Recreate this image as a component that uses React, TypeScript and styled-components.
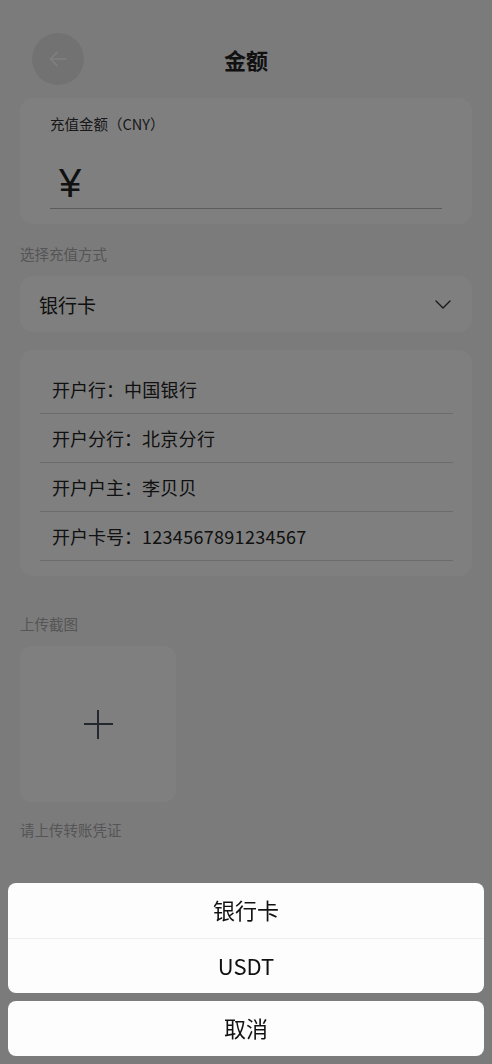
import React from "react";
import styled, { createGlobalStyle } from "styled-components";

const GlobalStyle = createGlobalStyle`
  * { box-sizing: border-box; }
  body {
    margin: 0;
    background: #f7f7f9;
    font-family: "Noto Sans CJK SC", "Noto Sans", sans-serif;
    color: #222;
  }
`;

const accountRows = [
  { label: "开户行", value: "中国银行" },
  { label: "开户分行", value: "北京分行" },
  { label: "开户户主", value: "李贝贝" },
  { label: "开户卡号", value: "1234567891234567" },
];

const sheetOptions = ["银行卡", "USDT"];

function App() {
  return (
    <>
      <GlobalStyle />
      <Page>
        <Header>
          <BackButton aria-label="返回">
            <svg width="26" height="26" viewBox="0 0 24 24" fill="none">
              <path d="M19 12H5M11 6l-6 6 6 6" stroke="#fff" strokeWidth="1.6" strokeLinecap="round" strokeLinejoin="round" />
            </svg>
          </BackButton>
          <Title>金额</Title>
        </Header>

        <AmountCard>
          <FieldLabel>充值金额（CNY）</FieldLabel>
          <AmountRow>
            <Currency>¥</Currency>
          </AmountRow>
        </AmountCard>

        <SectionLabel>选择充值方式</SectionLabel>
        <SelectBox>
          <span>银行卡</span>
          <svg width="16" height="9" viewBox="0 0 16 9" fill="none">
            <path d="M1 1l7 7 7-7" stroke="#333" strokeWidth="1.4" strokeLinecap="round" strokeLinejoin="round" />
          </svg>
        </SelectBox>

        <InfoCard>
          {accountRows.map((row) => (
            <InfoRow key={row.label}>
              {row.label}：<Value>{row.value}</Value>
            </InfoRow>
          ))}
        </InfoCard>

        <SectionLabel $gap={38}>上传截图</SectionLabel>
        <UploadBox>
          <svg width="30" height="30" viewBox="0 0 30 30" fill="none">
            <path d="M15 1v29M1 15h29" stroke="#4a4f5c" strokeWidth="2" />
          </svg>
        </UploadBox>
        <Hint>请上传转账凭证</Hint>
      </Page>

      <Mask />
      <Sheet>
        <SheetGroup>
          {sheetOptions.map((opt) => (
            <SheetItem key={opt}>{opt}</SheetItem>
          ))}
        </SheetGroup>
        <SheetGroup>
          <SheetItem>取消</SheetItem>
        </SheetGroup>
      </Sheet>
    </>
  );
}

const Page = styled.div`
  min-height: 1064px;
  padding: 0 20px;
`;

const Header = styled.header`
  display: grid;
  grid-template-columns: 52px 1fr 52px;
  align-items: center;
  padding: 33px 12px 0;
  margin-bottom: 13px;
`;

const BackButton = styled.button`
  width: 52px;
  height: 52px;
  border-radius: 50%;
  border: none;
  padding: 0;
  background: #e4e4e6;
  display: flex;
  align-items: center;
  justify-content: center;
`;

const Title = styled.h1`
  margin: 0;
  text-align: center;
  font-size: 22px;
  font-weight: 700;
  color: #222;
`;

const Card = styled.div`
  background: #fff;
  border-radius: 14px;
`;

const AmountCard = styled(Card)`
  padding: 17px 30px 15px;
`;

const FieldLabel = styled.div`
  font-size: 14.5px;
  line-height: 18px;
  color: #333;
`;

const AmountRow = styled.div`
  margin-top: 12px;
  height: 64px;
  display: flex;
  align-items: center;
  padding: 12px 0 0 9px;
  border-bottom: 1px solid #b8b8b8;
`;

const Currency = styled.span`
  font-family: "Liberation Sans", Arial, sans-serif;
  font-size: 40px;
  line-height: 1;
  color: #222;
`;

const SectionLabel = styled.div<{ $gap?: number }>`
  margin-top: ${(p) => p.$gap ?? 20}px;
  margin-bottom: 12px;
  font-size: 14.5px;
  line-height: 20px;
  color: #aaa;
`;

const SelectBox = styled(Card)`
  height: 56px;
  display: flex;
  align-items: center;
  justify-content: space-between;
  padding: 0 21px 0 19px;
  font-size: 19px;
  color: #222;
`;

const InfoCard = styled(Card)`
  margin-top: 18px;
  padding: 15px 19px 15px 20px;
`;

const InfoRow = styled.div`
  height: 49px;
  display: flex;
  align-items: center;
  padding-left: 12px;
  font-size: 18px;
  color: #222;
  border-bottom: 1px solid #d8d8d8;
`;

const Value = styled.span`
  letter-spacing: 0.3px;
`;

const UploadBox = styled.div`
  width: 156px;
  height: 156px;
  border-radius: 12px;
  background: #fff;
  display: flex;
  align-items: center;
  justify-content: center;
`;

const Hint = styled.div`
  margin-top: 18px;
  font-size: 14.5px;
  line-height: 20px;
  color: #aaa;
`;

const Mask = styled.div`
  position: fixed;
  inset: 0;
  background: rgba(0, 0, 0, 0.5);
`;

const Sheet = styled.div`
  position: fixed;
  left: 8px;
  right: 8px;
  bottom: 8px;
  display: flex;
  flex-direction: column;
  gap: 8px;
`;

const SheetGroup = styled.div`
  background: #fdfdfe;
  border-radius: 8px;
  overflow: hidden;
`;

const SheetItem = styled.div`
  height: 55px;
  display: flex;
  align-items: center;
  justify-content: center;
  padding-bottom: 3px;
  font-size: 22px;
  color: #111;

  & + & {
    border-top: 1px solid #f0f0f2;
  }
`;

export default App;
